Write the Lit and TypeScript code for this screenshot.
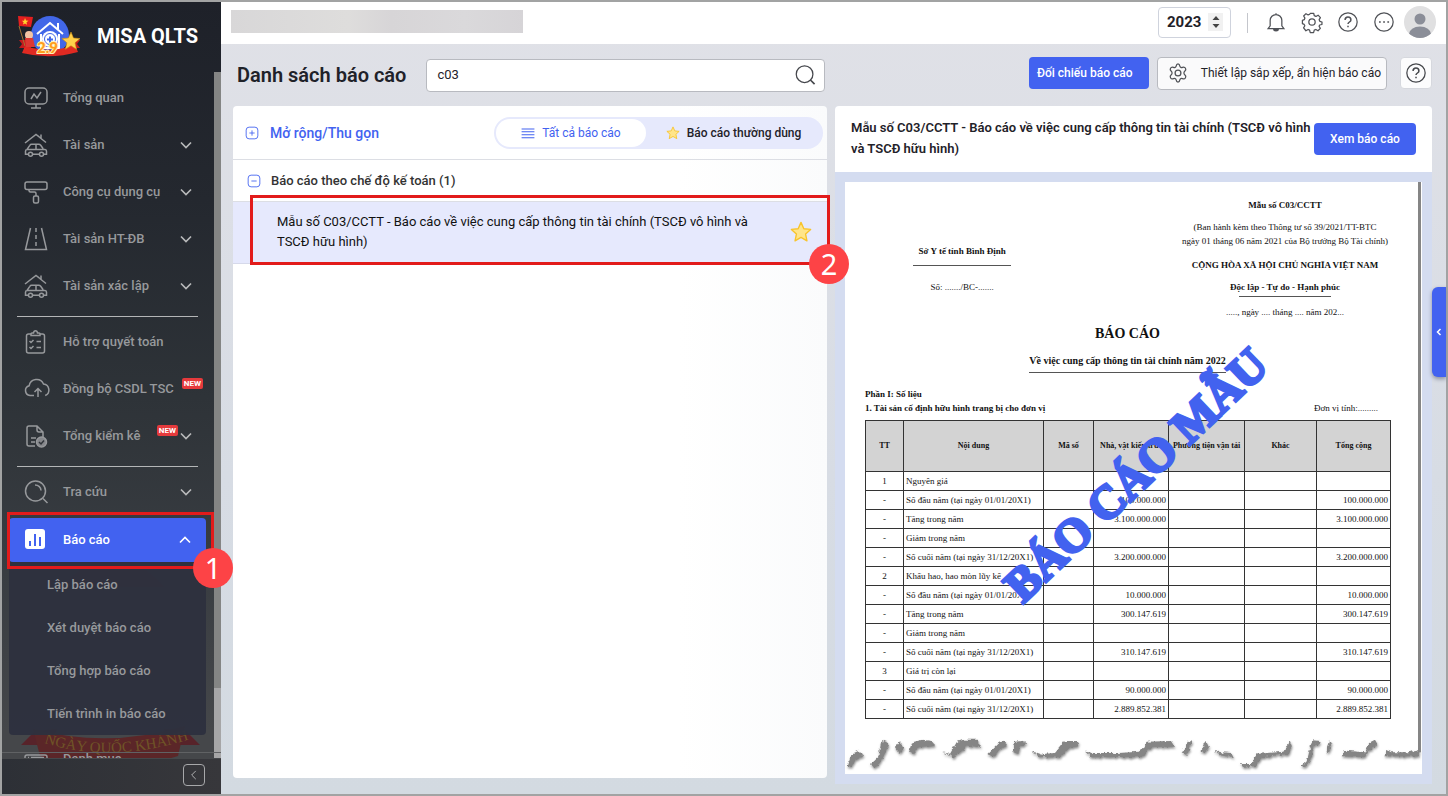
import { LitElement, html, css, svg, nothing } from "lit";
import { customElement, property, state } from "lit/decorators.js";
import { classMap } from "lit/directives/class-map.js";

const house = svg`<path d="M1 10 12 1.5l3.5 2.7M22 9.5l-5-4V1.5M17 5.5l-1.5-1.3M2.500 16.500h18.500c1 0 1.500.8 1.500 1.800v3h-3M15.500 21.300h-7M4.500 21.300h-3v-3c0-1 .6-1.800 1.500-1.800l2.800-4.200c.5-.8 1-1 1.800-1h7.200c.8 0 1.300.3 1.900 1l2.500 3.500M12 11.500v5"/><circle cx="6.500" cy="21.300" r="2"/><circle cx="17.500" cy="21.300" r="2"/>`;

const icons: Record<string, unknown> = {
  overview: svg`<rect x="1" y="2" width="22" height="16" rx="4"/><path d="M12 18v4M7 22h10M7 13l3-5 3 4 4-6"/>`,
  asset: house,
  tool: svg`<rect x="1" y="2" width="22" height="7.500" rx="2"/><path d="M5 9.500v1c0 1 .5 1.500 1.500 1.500h4c1 0 1.500.5 1.500 1.500V16"/><rect x="9.500" y="16" width="5" height="7" rx="1.500"/>`,
  road: svg`<path d="M6.500 1 1.500 22.500h21L17.500 1"/><path stroke-dasharray="4 3" d="M12 1v21"/>`,
  clipboard: svg`<rect x="2.500" y="4" width="18" height="19" rx="2"/><path fill="#30343a" d="M7 5.500V4c0-.7.500-1 1-1h1.500c.3-3 3.700-3 4 0H15c.6 0 1 .3 1 1v1.500z"/><path d="m5.500 11 1.500 1.500L9.500 10M12.500 11.500H17M5.500 17 7 18.500 9.500 16M12.500 17.500H17"/>`,
  cloud: svg`<path d="M10 18.500H6a5 5 0 0 1-.8-9.800A7.500 7.500 0 0 1 19.500 7a6 6 0 0 1 1.700 11.500"/><path d="M14 20v-8.500m-3.500 3.500 3.500-3.500 3.500 3.500"/>`,
  check: svg`<path d="M11 22H5c-1 0-2-.8-2-2V4c0-1.200 1-2 2-2h8l6 6v5M13 2v4c0 1.200.8 2 2 2h4M7 14h5M7 18h4"/><circle cx="17.500" cy="18" r="5" fill="#85878b"/><path stroke="#30343a" d="m15 18 2 2 3-3.500"/>`,
  search: svg`<circle cx="11.500" cy="11" r="10"/><path d="m19 18.500 4.500 4.500M11 5c3.500 0 6 2.500 6 5.500"/>`,
  report: svg`<rect x="1" y="1" width="20" height="20" rx="3" fill="#fff" stroke="none"/><path stroke="#4262f0" stroke-width="2" d="M6 18v-5M11 18V6M16 18V9"/>`,
  list: svg`<rect x="1" y="8" width="22" height="15" rx="2"/><path d="M1 13h22M4 10.500h1M7 10.500h13"/>`,
  down: svg`<path stroke-width="2" d="m6 9 6 6 6-6"/>`,
  up: svg`<path stroke-width="2" d="m6 15 6-6 6 6"/>`,
  left: svg`<path d="m15 5-7 7 7 7"/>`,
  chevron: svg`<path stroke-width="3" d="m15 6-6 6 6 6"/>`,
  find: svg`<circle cx="11.500" cy="11" r="10"/><path stroke-width="2" d="m18.500 18 5 5"/>`,
  plus: svg`<rect x="2" y="2" width="20" height="20" rx="5"/><path d="M12 7.500v9M7.500 12h9"/>`,
  minus: svg`<rect x="2" y="2" width="20" height="20" rx="5"/><path d="M7.500 12h9"/>`,
  lines: svg`<path stroke-width="1.800" d="M1 5h22M1 10h22M1 15h22M1 20h22"/>`,
  star: svg`<path fill="#ffe58a" stroke="#f8c42c" stroke-linejoin="round" d="m12 1.500 3.100 6.900 7.400.8-5.500 5 1.500 7.500-6.500-3.800-6.500 3.800L7 14.200l-5.500-5 7.400-.8z"/>`,
  bell: svg`<path d="M5 16.500V10a7 7 0 0 1 14 0v6.500l2.500 3.500H2.500zM12 3V1.500"/><path fill="currentColor" stroke="none" d="M8.500 20.500h7a3.500 3 0 0 1-7 0z"/>`,
  gear: svg`<circle cx="12" cy="12" r="3.800"/><path stroke-linejoin="round" d="M10 1.500h4l.7 2.900 2 .9 2.600-1.500 2.800 2.900-1.500 2.500.8 2 2.600.8v0l-.1 3-2.700.6-.7 1.500 1.500 2.600-2.800 2.800-2.600-1.500-1.900.8-.8 3h-4l-.8-3-1.800-.8-2.600 1.500L1.900 19l1.500-2.500-.8-1.600L.500 14v-4l2.200-.8.8-1.900L2 4.800 4.800 2l2.600 1.500 1.800-.8z"/>`,
  cog: svg`<circle cx="12" cy="12" r="3.500"/><path stroke-linejoin="round" d="M12 1c1.500 0 1.900.7 2.200 2.700.4 1.500 1.700 2.100 3.200 1.500 1.900-.8 2.700-.4 3.600 1.100s.7 2.200-.9 3.500c-1.300 1.100-1.300 3.300 0 4.400 1.600 1.300 1.800 2 .9 3.500s-1.700 1.900-3.600 1.100c-1.500-.6-2.800 0-3.200 1.500-.3 2-.7 2.700-2.200 2.700s-1.900-.7-2.200-2.700c-.4-1.500-1.700-2.100-3.200-1.500-1.900.8-2.700.4-3.600-1.100s-.7-2.200.9-3.500c1.300-1.100 1.300-3.300 0-4.400-1.600-1.300-1.800-2-.9-3.500s1.700-1.900 3.600-1.100c1.500.6 2.800 0 3.200-1.500C10.100 1.700 10.500 1 12 1z"/>`,
  help: svg`<circle cx="12" cy="12" r="11"/><path stroke-width="1.800" d="M8.500 9.500c0-4.500 7-4.500 7 0 0 2.500-3.500 2.500-3.500 5M12 16.500v1.800"/>`,
  more: svg`<circle cx="12" cy="12" r="11"/><path stroke-width="2" stroke-linecap="square" d="M7 12h.1M12 12h.1M17 12h.1"/>`,
};

@customElement("ui-icon")
class UiIcon extends LitElement {
  @property() name = "";
  static styles = css`
    :host { display: inline-flex; flex: none; width: 24px; height: 24px; }
    svg { width: 100%; height: 100%; fill: none; stroke: currentColor; stroke-width: 1.5; overflow: visible; }
  `;
  render() {
    return html`<svg viewBox="0 0 24 24" aria-hidden="true">${icons[this.name] ?? nothing}</svg>`;
  }
}

@customElement("step-mark")
class StepMark extends LitElement {
  @property() label = "";
  static styles = css`
    :host { position: absolute; inset: var(--mark-inset, 0); border: 3px solid #e21b1b; pointer-events: none; z-index: 5; }
    .dot {
      position: absolute; right: -22px; bottom: -22px; width: 40px; height: 40px; border-radius: 50%;
      background: #fd4346; color: #fff; font: 29px/40px "Noto Sans", sans-serif; text-align: center;
    }
  `;
  render() {
    return html`<span class="dot">${this.label}</span>`;
  }
}

interface Item { icon: string; text: string; arrow?: boolean; badge?: boolean; }
const groups: Item[][] = [
  [
    { icon: "overview", text: "Tổng quan" },
    { icon: "asset", text: "Tài sản", arrow: true },
    { icon: "tool", text: "Công cụ dụng cụ", arrow: true },
    { icon: "road", text: "Tài sản HT-ĐB", arrow: true },
    { icon: "asset", text: "Tài sản xác lập", arrow: true },
  ],
  [
    { icon: "clipboard", text: "Hỗ trợ quyết toán" },
    { icon: "cloud", text: "Đồng bộ CSDL TSC", badge: true },
    { icon: "check", text: "Tổng kiểm kê", badge: true, arrow: true },
  ],
  [{ icon: "search", text: "Tra cứu", arrow: true }],
];
const subItems = ["Lập báo cáo", "Xét duyệt báo cáo", "Tổng hợp báo cáo", "Tiến trình in báo cáo"];

@customElement("side-bar")
class SideBar extends LitElement {
  @state() private open = true;
  static styles = css`
    :host {
      display: flex; flex-direction: column; position: relative; z-index: 2; width: 219px; flex: none; min-height: 0;
      background: linear-gradient(#1e2129, #24282f 25%, #2e3338 50%, #393d42 72%, #45474a 92%);
      color: #97999c; font-size: 13px; font-weight: 500;
    }
    .brand { display: flex; align-items: center; gap: 15px; height: 70px; padding: 0 0 2px 15px; flex: none; box-sizing: border-box; }
    .brand svg { width: 65px; height: 42px; }
    .brand b { color: #fff; font-size: 20px; font-weight: 700; }
    .scroll { flex: 1; min-height: 0; display: flex; overflow-y: clip; position: relative; }
    nav { flex: 1; min-width: 0; position: relative; padding-top: 2px; }
    .track { width: 7px; background: #848584; display: flex; align-items: flex-end; }
    .thumb { width: 7px; height: 70px; background: #a6a6a7; }
    .item {
      display: flex; align-items: center; gap: 15px; height: 47px; padding: 0 15px 0 22px; box-sizing: border-box;
      color: inherit; text-decoration: none; position: relative;
    }
    .item ui-icon { width: 24px; height: 24px; }
    .label { flex: 1; white-space: nowrap; }
    .item ui-icon.arrow { width: 20px; height: 20px; margin-right: 3px; color: #b9babb; }
    .badge {
      background: #e53a3c; color: #fff; font-size: 8px; line-height: 11px; font-weight: 700; padding: 0 2px; border-radius: 2px;
      margin-top: -10px;
    }
    .badge.wide { margin-right: -4px; margin-left: -15px; }
    .badge.tight { margin-right: -17px; }
    hr { border: 0; height: 1px; background: #b4b6b7; margin: 7px 16px 1px 15px; }
    .wrap { position: relative; margin: 3px 8px 0 7px; --mark-inset: -6px -8px -7px -2px; }
    .active {
      display: flex; align-items: center; gap: 15px; width: 100%; height: 44px; border: 0; border-radius: 4px; padding: 0 8px 0 15px;
      background: #4262f0; color: #fff; font: inherit; text-align: left;
    }
    .active .arrow { width: 20px; height: 20px; margin-right: 3px; }
    .sub { margin: 0 8px 0 7px; background: #2d303ef2; border-radius: 0 0 4px 4px; position: relative; padding-top: 1px; }
    .sub a { display: flex; align-items: center; height: 43px; padding-left: 38px; color: inherit; text-decoration: none; }
    .emblem { position: absolute; left: 15px; bottom: -9px; width: 185px; height: 210px; }
    .foot {
      height: 42px; margin-top: -6px; flex: none; display: flex; align-items: center; justify-content: flex-end; padding-right: 16px; box-sizing: border-box;
      background: linear-gradient(90deg, #2d3036, #37373b) 0 6px no-repeat; border-top: 1px solid #606264; z-index: 1;
    }
    .fold { width: 22px; height: 22px; margin-top: 2px; padding: 0; border: 1px solid #a7a8aa; border-radius: 4px; background: none; color: #c0c1c2; display: grid; place-items: center; }
    .fold ui-icon { width: 14px; height: 14px; }
  `;
  private row(i: Item) {
    return html`<a class="item" href="#">
      <ui-icon name=${i.icon}></ui-icon><span class="label">${i.text}</span>
      ${i.badge ? html`<span class=${classMap({ badge: true, wide: !i.arrow, tight: !!i.arrow })}>NEW</span>` : nothing}
      ${i.arrow ? html`<ui-icon class="arrow" name="down"></ui-icon>` : nothing}
    </a>`;
  }
  render() {
    return html`
      <div class="brand">
        <svg viewBox="0 0 65 42" aria-hidden="true">
          <circle cx="33" cy="20" r="19" fill="#4267e8" />
          <path d="M2 25h12v8H2l3-4zM63 25H50v8h13l-3-4z" fill="#c51a1d" />
          <path d="M20 19 33 8l13 11M41 14V8M24 19v14h18V19" fill="none" stroke="#fff" stroke-width="2" />
          <circle cx="33" cy="24" r="8" fill="#fff" /><circle cx="33" cy="24" r="5.500" fill="#fff" stroke="#4267e8" />
          <path d="M33 21.500v6M30 24.500h6" stroke="#4267e8" stroke-width="2" />
          <path d="M8 31q25 8 50-1l3 7q-28 8-56 1z" fill="#e02a22" />
          <path d="m1 1 15 1-2 10-12-1z" fill="#e41f1f" /><path d="m8 3 1 2.500 2.500.3-2 1.500.5 2.500-2-1.300-2 1 .6-2.300-1.800-1.500h2.300z" fill="#ffd42e" />
          <path d="M2 11 8 31" stroke="#a67434" /><circle cx="12" cy="20" r="4" fill="#f3c4a4" /><path d="M8 23h8l2 9H9z" fill="#dd3833" />
          <path d="m54 17 2.500 6 6.500.6-5 4.200 1.500 6.500-5.500-3.500-5.700 3.500 1.600-6.500-5-4.200 6.500-.6z" fill="#ffd04a" stroke="#c98c13" stroke-width=".6" />
          <text x="20" y="38" font-family="Lato, sans-serif" font-weight="900" font-size="15" fill="#ff9d1c" stroke="#fff1b8" stroke-width="2" paint-order="stroke">2.9</text>
        </svg>
        <b>MISA QLTS</b>
      </div>
      <div class="scroll">
        <nav>
          <svg class="emblem" viewBox="0 0 185 210" aria-hidden="true">
            <path d="M45 30Q95-28 148 30z" fill="#632c2e" opacity=".6" />
            <path d="M4 188 18 174l22-2-6 16zM183 188l-14-14-22-2 6 16z" fill="#57232a" />
            <path d="M16 172q76 20 152-3l-7 30q-70 22-138 0z" fill="#5b2628" />
            <path id="arc" d="M27 186q64 20 140-2" fill="none" />
            <text fill="#6f5427" font-family="Liberation Serif, serif" font-size="15"><textPath href="#arc">NGÀY QUỐC KHÁNH</textPath></text>
          </svg>
          ${groups.map((g, n) => html`${n ? html`<hr />` : nothing}${g.map((i) => this.row(i))}`)}
          <div class="wrap">
            <button class="active" @click=${() => (this.open = !this.open)}>
              <ui-icon name="report"></ui-icon><span class="label">Báo cáo</span>
              <ui-icon class="arrow" name=${this.open ? "up" : "down"}></ui-icon>
            </button>
            <step-mark label="1"></step-mark>
          </div>
          ${this.open ? html`<div class="sub">${subItems.map((t) => html`<a href="#">${t}</a>`)}</div>` : nothing}
          <a class="item" href="#"><ui-icon name="list"></ui-icon><span class="label">Danh mục</span></a>
        </nav>
        <div class="track"><div class="thumb"></div></div>
      </div>
      <div class="foot"><button class="fold" aria-label="Thu gọn"><ui-icon name="left"></ui-icon></button></div>
    `;
  }
}

const cols = ["TT", "Nội dung", "Mã số", "Nhà, vật kiến trúc", "Phương tiện vận tải", "Khác", "Tổng cộng"];
const rows: [string, string, string][] = [
  ["1", "Nguyên giá", ""],
  ["-", "Số đầu năm (tại ngày 01/01/20X1)", "100.000.000"],
  ["-", "Tăng trong năm", "3.100.000.000"],
  ["-", "Giảm trong năm", ""],
  ["-", "Số cuối năm (tại ngày 31/12/20X1)", "3.200.000.000"],
  ["2", "Khấu hao, hao mòn lũy kế", ""],
  ["-", "Số đầu năm (tại ngày 01/01/20X1)", "10.000.000"],
  ["-", "Tăng trong năm", "300.147.619"],
  ["-", "Giảm trong năm", ""],
  ["-", "Số cuối năm (tại ngày 31/12/20X1)", "310.147.619"],
  ["3", "Giá trị còn lại", ""],
  ["-", "Số đầu năm (tại ngày 01/01/20X1)", "90.000.000"],
  ["-", "Số cuối năm (tại ngày 31/12/20X1)", "2.889.852.381"],
];

@customElement("report-sheet")
class ReportSheet extends LitElement {
  static styles = css`
    :host { display: block; position: relative; background: #fff; color: #111; font: 9px/14px "Liberation Serif", serif; }
    .paper { margin-right: 1px; padding: 16px 28px 15px 20px; border-right: 3px solid #858585; }
    .top { display: flex; justify-content: space-between; text-align: center; }
    .org { width: 37%; padding-top: 46px; }
    .nation { width: 40%; }
    p { margin: 0; white-space: nowrap; }
    .rule { width: 98px; height: 1px; background: #555; margin: 7px auto 0; }
    .nation .rule { width: 92px; margin-top: 2px; }
    .gap { margin-top: 8px; }
    .org .gap { margin-top: 14px; }
    .more { margin-top: 10px; }
    h2 { margin: 5px 0 0; font-size: 14px; line-height: 20px; text-align: center; }
    h3 { margin: 8px auto 0; padding-bottom: 3px; font-size: 10px; line-height: 17px; width: max-content; border-bottom: 1px solid #555; }
    .heads { display: flex; justify-content: space-between; align-items: flex-end; margin: 14px 0 5px; }
    .unit { padding-right: 12px; }
    table { width: 100%; border-collapse: collapse; table-layout: fixed; }
    th, td { border: 1px solid #333; padding: 0 2px; line-height: 16px; white-space: nowrap; font-size: 9px; box-sizing: border-box; }
    th { background: #d3d3d3; height: 51px; padding: 0; font-size: 8px; }
    td { text-align: right; height: 19px; }
    td:first-child { text-align: center; }
    td:nth-child(2) { text-align: left; }
    .w0 { width: 38px; } .w1 { width: 140px; } .w2 { width: 50px; } .w3 { width: 75px; } .w4 { width: 76px; } .w5 { width: 72px; } .w6 { width: 74px; }
    .torn { display: block; width: 100%; height: 40px; }
    .torn path { fill: #858585; }
    .stamp {
      position: absolute; left: 291px; top: 293px; transform: translate(-50%, -50%) rotate(-43.600deg); white-space: nowrap;
      color: #4262ef; font-weight: 700; font-size: 47px; line-height: 1; -webkit-text-stroke: 3px #4262ef;
    }
  `;
  render() {
    return html`
      <div class="paper">
        <div class="top">
          <div class="org">
            <p><b>Sở Y tế tỉnh Bình Định</b></p>
            <div class="rule"></div>
            <p class="gap">Số: ......./BC-.......</p>
          </div>
          <div class="nation">
            <p><b>Mẫu số C03/CCTT</b></p>
            <p class="gap">(Ban hành kèm theo Thông tư số 39/2021/TT-BTC</p>
            <p>ngày 01 tháng 06 năm 2021 của Bộ trưởng Bộ Tài chính)</p>
            <p class="more"><b>CỘNG HÒA XÃ HỘI CHỦ NGHĨA VIỆT NAM</b></p>
            <p class="gap"><b>Độc lập - Tự do - Hạnh phúc</b></p>
            <div class="rule"></div>
            <p class="gap">....., ngày .... tháng .... năm 202...</p>
          </div>
        </div>
        <h2>BÁO CÁO</h2>
        <h3>Về việc cung cấp thông tin tài chính năm 2022</h3>
        <div class="heads">
          <div><p><b>Phần I: Số liệu</b></p><p><b>1. Tài sản cố định hữu hình trang bị cho đơn vị</b></p></div>
          <span class="unit">Đơn vị tính:.........</span>
        </div>
        <table>
          <thead><tr>${cols.map((c, n) => html`<th class="w${n}">${c}</th>`)}</tr></thead>
          <tbody>
            ${rows.map(([a, b, v]) => html`<tr><td>${a}</td><td>${b}</td><td></td><td>${v}</td><td></td><td></td><td>${v}</td></tr>`)}
          </tbody>
        </table>
      </div>
      <svg class="torn" viewBox="30 345 1731 120" preserveAspectRatio="none" aria-hidden="true">
        <filter id="rough" x="-2%" y="-20%" width="104%" height="150%">
          <feTurbulence type="fractalNoise" baseFrequency=".09" numOctaves="2" seed="4" />
          <feDisplacementMap in="SourceGraphic" scale="14" xChannelSelector="R" yChannelSelector="G" result="r" />
          <feDropShadow in="r" dx="2" dy="5" stdDeviation="3" flood-color="#888" />
        </filter>
        <path d="M1749 340h9v60h-9z" />
        <path filter="url(#rough)" d="M38 440 50 405 72 395 84 410 60 425 50 445ZM108 435 130 415 138 370 150 362 160 378 140 425 118 448ZM180 385 192 370 208 385 196 405ZM222 400 232 370 262 362 290 366 300 378 250 385 235 405ZM322 400 345 405 365 370 385 362 425 362 438 385 400 380 375 400 355 415ZM460 405 490 375 505 365 518 380 495 390 475 415ZM535 400 540 368 568 365 570 378 555 380 550 405ZM590 398 625 405 660 402 690 366 722 366 732 382 705 385 675 415 610 415ZM750 398 775 402 850 402 915 398 935 368 1008 366 1018 383 950 383 925 413 770 415ZM1040 400 1060 365 1072 368 1055 410ZM1100 395 1112 365 1122 385 1108 403ZM1140 396 1160 400 1190 402 1196 414 1160 410ZM1218 435 1250 435 1265 405 1345 398 1365 366 1370 380 1362 405 1280 415 1262 440 1225 446ZM1398 440 1415 428 1432 364 1455 366 1450 378 1440 377 1425 425 1410 445ZM1472 395 1483 364 1490 380 1480 405ZM1520 412 1530 395 1590 400 1605 370 1620 362 1628 378 1600 395 1590 414ZM1648 412 1653 393 1670 400 1720 400 1755 393 1750 412 1660 412Z" />
      </svg>
      <div class="stamp">BÁO CÁO MẪU</div>
    `;
  }
}

@customElement("app-root")
class AppRoot extends LitElement {
  @state() private query = "c03";
  static styles = css`
    :host {
      display: flex; box-sizing: border-box; height: 100vh; min-height: 700px; border: 2px solid #a2a3a3;
      font: 13px/20px Roboto, sans-serif; color: #1f2229;
      background: linear-gradient(#e0e1e7, #d7dce4 60%, #d3dae1);
    }
    button, input { font: inherit; color: inherit; box-sizing: border-box; }
    main { flex: 1; min-width: 0; display: flex; flex-direction: column; position: relative; }
    header { display: flex; align-items: center; height: 42px; background: #fff; padding: 0 10px; flex: none; }
    .unit { width: 292px; height: 23px; background: linear-gradient(90deg, #d8d7d8, #dedddc 40%, #d7d5d7 55%, #dad9db 80%, #d6d4d7); margin-bottom: 3px; }
    .year { display: flex; align-items: center; margin-left: auto; width: 73px; height: 31px; border: 1px solid #cfd3dd; border-radius: 4px; box-sizing: border-box; padding: 0 8px; gap: 5px; margin-bottom: 2px; }
    .year input { width: 36px; border: 0; padding: 0; font-size: 15px; font-weight: 700; outline: 0; background: none; }
    .year button { width: 15px; height: 18px; border: 0; padding: 0; background: #f1f1f1; display: grid; place-items: center; flex: none; }
    .year svg { width: 10px; height: 14px; fill: #444; }
    .bar { width: 1px; height: 20px; background: #c4c6cc; margin: 0 18px 0 16px; }
    .tools { display: flex; gap: 16px; align-items: center; margin-bottom: 2px; }
    .plain { border: 0; padding: 0; background: none; display: inline-flex; width: 20px; height: 20px; color: #505257; }
    .plain ui-icon { width: 20px; height: 20px; }
    .avatar { width: 32px; height: 32px; margin-left: 10px; margin-bottom: 2px; }
    .grid { flex: 1; min-height: 0; display: grid; grid-template-columns: 594fr 597fr; grid-template-rows: 62px minmax(0, 1fr); column-gap: 8px; padding: 0 14px 10px 12px; }
    .head { display: flex; align-items: center; gap: 20px; padding: 0 2px 0 4px; }
    h1 { margin: 0; font-size: 20px; font-weight: 600; white-space: nowrap; }
    .search { flex: 1; display: flex; align-items: center; height: 33px; box-sizing: border-box; background: #fff; border: 1px solid #b8bac0; border-radius: 4px; padding: 0 9px 0 10px; }
    .search input { flex: 1; min-width: 0; border: 0; outline: 0; padding: 0; background: none; }
    .search ui-icon { width: 20px; height: 20px; color: #45474c; }
    .actions { display: flex; align-items: center; justify-content: flex-end; gap: 8px; padding-bottom: 4px; }
    .primary { border: 0; border-radius: 4px; background: #4262f0; color: #fff; font-size: 12px; font-weight: 500; height: 32px; white-space: nowrap; flex: none; }
    .compare { width: 120px; padding: 0 8px; text-align: left; }
    .setup { display: flex; align-items: center; height: 33px; border: 1px solid #b8bac0; border-radius: 4px; background: #fafafb; padding: 0 5px 0 10px; font-size: 12px; white-space: nowrap; width: 230px; justify-content: space-between; }
    .setup ui-icon { width: 20px; height: 20px; color: #505257; }
    .square { width: 32px; height: 32px; border: 1px solid #d6d8de; border-radius: 4px; background: #fcfcfd; padding: 0; margin-left: 5px; display: grid; place-items: center; color: #45474c; }
    .square ui-icon { width: 20px; height: 20px; }
    .list { background: linear-gradient(90deg, #fff 75%, #fafbfc); border-radius: 4px; margin-bottom: 6px; }
    .top { display: flex; align-items: center; height: 53px; border-bottom: 1px solid #dcdee4; padding: 0 4px 0 12px; }
    .expand { border: 0; background: none; padding: 0; display: flex; align-items: center; gap: 11px; color: #4262f0; font-size: 14px; font-weight: 500; }
    ui-icon.box { width: 14px; height: 14px; color: #4262f0; }
    .tabs { margin-left: auto; display: flex; width: 329px; height: 32px; box-sizing: border-box; padding: 2px; background: #e6e9fc; border-radius: 16px; }
    .tab { flex: 1; display: flex; align-items: center; justify-content: center; gap: 7px; border: 0; background: none; border-radius: 14px; padding: 0; font-size: 12px; font-weight: 500; white-space: nowrap; }
    .tab.on { background: #fff; color: #4262f0; flex: 0 0 150px; font-weight: 400; }
    .tab ui-icon { width: 14px; height: 14px; }
    .group { display: flex; align-items: center; gap: 10px; height: 41px; box-sizing: content-box; padding-left: 14px; font-weight: 500; line-height: 18px; color: #333; border-bottom: 1px solid #dcdee4; }
    .entry { position: relative; display: flex; align-items: center; gap: 24px; padding: 10px 15px 11px 44px; background: #e6e9fd; border-bottom: 1px solid #d6d9ea; color: #111; --mark-inset: -7px -3px -2px 17px; }
    .entry span { flex: 1; }
    .entry ui-icon { width: 22px; height: 22px; }
    .view { background: #d4dcf0; border-radius: 4px 4px 0 0; min-height: 0; overflow: hidden; }
    .caption { display: flex; justify-content: space-between; align-items: center; height: 66px; background: #fff; padding: 0 16px; line-height: 21px; font-weight: 600; }
    .caption .text { flex: 1; margin-bottom: 2px; }
    .caption .primary { width: 102px; }
    report-sheet { margin: 10px; }
    .flap { position: absolute; right: 0; top: 285px; width: 14px; height: 90px; padding: 0; border: 0; border-radius: 6px 0 0 6px; background: #4262f0; color: #fff; display: grid; place-items: center; box-shadow: 0 2px 4px #8a8f9f; }
    .flap ui-icon { width: 12px; height: 12px; }
  `;
  render() {
    return html`
      <side-bar></side-bar>
      <main>
        <header>
          <div class="unit"></div>
          <div class="year">
            <input aria-label="Năm" value="2023" />
            <button aria-label="Đổi năm"><svg viewBox="0 0 10 14"><path d="M1.500 5 5 1l3.500 4zM1.500 9 5 13l3.500-4z" /></svg></button>
          </div>
          <div class="bar"></div>
          <div class="tools">
            ${["bell", "gear", "help", "more"].map((n) => html`<button class="plain" aria-label=${n}><ui-icon name=${n}></ui-icon></button>`)}
          </div>
          <svg class="avatar" viewBox="0 0 32 32" aria-hidden="true">
            <clipPath id="c"><circle cx="16" cy="16" r="16" /></clipPath>
            <g clip-path="url(#c)"><path fill="#e0e0e1" d="M0 0h32v32H0z" /><circle cx="16" cy="13" r="5.500" fill="#8b8e98" /><ellipse cx="16" cy="28" rx="11" ry="7.500" fill="#8b8e98" /></g>
          </svg>
        </header>
        <div class="grid">
          <div class="head">
            <h1>Danh sách báo cáo</h1>
            <label class="search">
              <input aria-label="Tìm kiếm" .value=${this.query} @input=${(e: Event) => (this.query = (e.target as HTMLInputElement).value)} />
              <ui-icon name="find"></ui-icon>
            </label>
          </div>
          <div class="actions">
            <button class="primary compare">Đối chiếu báo cáo</button>
            <button class="setup"><ui-icon name="cog"></ui-icon>Thiết lập sắp xếp, ẩn hiện báo cáo</button>
            <button class="square" aria-label="Trợ giúp"><ui-icon name="help"></ui-icon></button>
          </div>
          <section class="list">
            <div class="top">
              <button class="expand"><ui-icon class="box" name="plus"></ui-icon>Mở rộng/Thu gọn</button>
              <div class="tabs">
                <button class="tab on"><ui-icon name="lines"></ui-icon>Tất cả báo cáo</button>
                <button class="tab"><ui-icon name="star"></ui-icon>Báo cáo thường dùng</button>
              </div>
            </div>
            <div class="group"><ui-icon class="box" name="minus"></ui-icon>Báo cáo theo chế độ kế toán (1)</div>
            <div class="entry">
              <span>Mẫu số C03/CCTT - Báo cáo về việc cung cấp thông tin tài chính (TSCĐ vô hình và TSCĐ hữu hình)</span>
              <ui-icon name="star"></ui-icon>
              <step-mark label="2"></step-mark>
            </div>
          </section>
          <section class="view">
            <div class="caption">
              <span class="text">Mẫu số C03/CCTT - Báo cáo về việc cung cấp thông tin tài chính (TSCĐ vô hình và TSCĐ hữu hình)</span>
              <button class="primary">Xem báo cáo</button>
            </div>
            <report-sheet></report-sheet>
          </section>
        </div>
        <button class="flap" aria-label="Mở bảng"><ui-icon name="chevron"></ui-icon></button>
      </main>
    `;
  }
}
